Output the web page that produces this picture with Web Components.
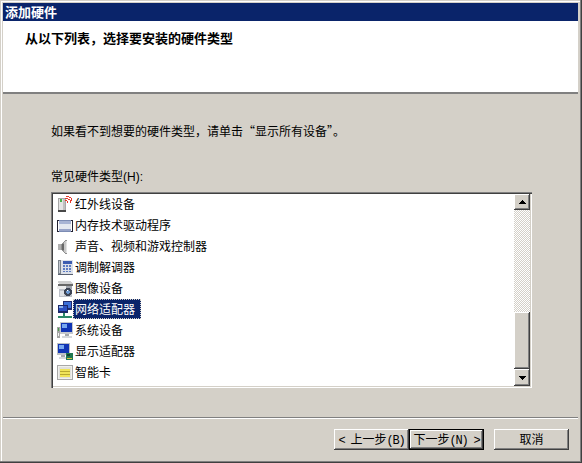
<!DOCTYPE html>
<html lang="zh-CN">
<head>
<meta charset="utf-8">
<title>添加硬件</title>
<style>
  html, body { margin: 0; padding: 0; background: #d4d0c8; }
  body { font: 12px/16px "Noto Sans CJK SC", sans-serif; color: #000; }
</style>
</head>
<body>

<wizard-window caption="添加硬件" heading="从以下列表，选择要安装的硬件类型">
  <wizard-text>如果看不到想要的硬件类型，请单击“显示所有设备”。</wizard-text>
  <hw-list label="常见硬件类型" access="(H):">
    <hw-item icon="infrared">红外线设备</hw-item>
    <hw-item icon="memory">内存技术驱动程序</hw-item>
    <hw-item icon="sound">声音、视频和游戏控制器</hw-item>
    <hw-item icon="modem">调制解调器</hw-item>
    <hw-item icon="imaging">图像设备</hw-item>
    <hw-item icon="network" selected>网络适配器</hw-item>
    <hw-item icon="system">系统设备</hw-item>
    <hw-item icon="display">显示适配器</hw-item>
    <hw-item icon="smartcard">智能卡</hw-item>
  </hw-list>
  <win-button slot="footer"><span>&lt; </span>上一步<span>(B)</span></win-button>
  <win-button slot="footer" default>下一步<span>(N) &gt;</span></win-button>
  <win-button slot="footer" class="cancel">取消</win-button>
</wizard-window>

<script>
(function () {
  'use strict';

  const BEVEL = 'inset -1px -1px 0 #404040, inset 1px 1px 0 #fff, inset -2px -2px 0 #808080';

  class WizardWindow extends HTMLElement {
    constructor() {
      super();
      this.attachShadow({ mode: 'open' });
    }

    connectedCallback() {
      const caption = this.getAttribute('caption') || '';
      const heading = this.getAttribute('heading') || '';

      this.shadowRoot.innerHTML = `
        <style>
          :host {
            display: flex;
            flex-direction: column;
            box-sizing: border-box;
            width: 582px;
            height: 463px;
            padding: 3px 4px 4px 3px;
            background: #d4d0c8;
            box-shadow: inset -1px -1px 0 #404040, inset -2px -2px 0 #808080,
                        inset 1px 1px 0 #d4d0c8, inset 2px 2px 0 #fff;
          }
          .title {
            height: 18px;
            line-height: 18px;
            padding-left: 2px;
            background: #0a246a;
            color: #fff;
            font-size: 13px;
            font-weight: 700;
          }
          .head {
            box-sizing: border-box;
            height: 73px;
            padding: 8px 0 0 22px;
            background: #fff;
            box-shadow: inset 0 -2px 0 #808080, inset 0 -1px 0 #fff;
            font-size: 13px;
            line-height: 17px;
            font-weight: 700;
          }
          .body {
            flex: 1;
            display: flex;
            flex-direction: column;
            min-height: 0;
            padding: 29px 0 0 48px;
            gap: 29px;
          }
          .foot {
            height: 42px;
            box-sizing: border-box;
            padding: 11px 9px 0 0;
            display: flex;
            justify-content: flex-end;
            align-items: flex-start;
            border-top: 1px solid #808080;
            box-shadow: inset 0 1px 0 #fff;
          }
          ::slotted(.cancel) { margin-left: 10px; }
        </style>
        <div class="title">${caption}</div>
        <div class="head">${heading}</div>
        <div class="body"><slot></slot></div>
        <div class="foot"><slot name="footer"></slot></div>
      `;
    }
  }

  class WizardText extends HTMLElement {
    constructor() {
      super();
      this.attachShadow({ mode: 'open' });
      this.shadowRoot.innerHTML = `
        <style>:host { display: block; height: 16px; line-height: 16px; color: #000; }</style>
        <slot></slot>
      `;
    }
  }

  class HwList extends HTMLElement {
    constructor() {
      super();
      this.attachShadow({ mode: 'open' });
    }

    connectedCallback() {
      const label = this.getAttribute('label') || '';
      const access = this.getAttribute('access') || '';

      this.shadowRoot.innerHTML = `
        <style>
          :host { display: block; }
          .label { height: 16px; line-height: 16px; margin-bottom: 8px; }
          .label span { font: 12px/16px "Liberation Sans", sans-serif; }
          .box {
            box-sizing: border-box;
            width: 481px;
            height: 196px;
            padding: 2px;
            display: flex;
            background: #fff;
            box-shadow: inset 1px 1px 0 #808080, inset 2px 2px 0 #404040,
                        inset -1px -1px 0 #fff, inset -2px -2px 0 #d4d0c8;
          }
          .rows { flex: 1; min-width: 0; overflow: hidden; }
        </style>
        <div class="label">${label}<span>${access}</span></div>
        <div class="box">
          <div class="rows"><slot></slot></div>
          <hw-scrollbar></hw-scrollbar>
        </div>
      `;
    }
  }

  class HwScrollbar extends HTMLElement {
    constructor() {
      super();
      this.attachShadow({ mode: 'open' });
      this.shadowRoot.innerHTML = `
        <style>
          :host { display: flex; flex-direction: column; width: 16px; height: 192px; flex: none; }
          .btn {
            height: 16px;
            flex: none;
            display: flex;
            align-items: center;
            justify-content: center;
            background: #d4d0c8;
            box-shadow: ${BEVEL};
          }
          .down { height: 17px; }
          .track {
            flex: 1;
            background: repeating-conic-gradient(#d4d0c8 0 25%, #fff 0 50%) 0 0 / 2px 2px;
          }
          .thumb { height: 57px; flex: none; background: #d4d0c8; box-shadow: ${BEVEL}; }
          svg { display: block; }
        </style>
        <div class="btn"><svg width="7" height="4" shape-rendering="crispEdges"><path d="M3 0h1v1h1v1h1v1h1v1H0V3h1V2h1V1h1z"/></svg></div>
        <div class="track"></div>
        <div class="thumb"></div>
        <div class="btn down"><svg width="7" height="4" shape-rendering="crispEdges"><path d="M0 0h7v1H6v1H5v1H4v1H3V3H2V2H1V1H0z"/></svg></div>
      `;
    }
  }

  class HwItem extends HTMLElement {
    constructor() {
      super();
      this.attachShadow({ mode: 'open' });
    }

    connectedCallback() {
      const icon = this.getAttribute('icon') || '';
      this.shadowRoot.innerHTML = `
        <style>
          :host {
            display: flex;
            align-items: center;
            height: 21px;
            padding-left: 4px;
          }
          .text {
            box-sizing: border-box;
            margin-bottom: 1px;
            padding: 0 6px 0 2px;
            height: 20px;
            line-height: 20px;
            white-space: nowrap;
          }
          :host([selected]) .text {
            padding: 0 5px 0 1px;
            line-height: 18px;
            background: #0a246a;
            color: #fff;
            border: 1px dotted #d4d0c8;
          }
        </style>
        <hw-icon name="${icon}"></hw-icon>
        <span class="text"><slot></slot></span>
      `;
    }
  }

  // 16x17 cells, drawn to follow the old Windows device icons
  const ICONS = {
    infrared: `
      <rect x="1" y="2" width="8" height="13" fill="#a8a8a8"/>
      <rect x="2" y="3" width="5" height="11" fill="#e4e4e4"/>
      <rect x="6" y="3" width="2" height="11" fill="#c0c0c0"/>
      <rect x="3" y="3" width="2" height="3" fill="#48b048"/>
      <rect x="1" y="14" width="8" height="2" fill="#484848"/>
      <path d="M8 4h2v1h1v2h-1V5H8zM8 2h3v1h2v1h1v3h-1V4h-2V3H8zM9 0h3v1h2v1h1v3h-1V2h-2V1H9z" fill="#e83828"/>`,
    memory: `
      <path d="M0 3h2v1H1v10h1v1H0zM14 3h2v12h-2v-1h1V4h-1z" fill="#202030"/>
      <rect x="2" y="3" width="12" height="12" fill="#7c8cb4"/>
      <rect x="2" y="4" width="12" height="3" fill="#a8b4d4"/>
      <rect x="2" y="7" width="12" height="5" fill="#e4e8f0"/>
      <rect x="2" y="12" width="12" height="2" fill="#98a4c8"/>`,
    sound: `
      <rect x="1" y="6" width="4" height="6" fill="#b0b0b0"/>
      <path d="M4 6h1V5h1V4h1V3h1V2h2v14H8v-1H7v-1H6v-1H5v-1H4z" fill="#909090"/>
      <path d="M7 4h1V3h2v12H8v-1H7z" fill="#c8c8c8"/>
      <rect x="5" y="6" width="2" height="6" fill="#686868"/>
      <rect x="9" y="3" width="1" height="12" fill="#e4e4e4"/>`,
    modem: `
      <rect x="3" y="1" width="13" height="14" fill="#dce0e8"/>
      <rect x="1" y="1" width="3" height="14" fill="#7c848c"/>
      <rect x="2" y="2" width="1" height="12" fill="#c4c8d0"/>
      <rect x="6" y="2" width="9" height="3" fill="#3c5cb0"/>
      <path d="M6 6h2v2H6zM9 6h2v2H9zM12 6h2v2h-2zM6 9h2v2H6zM9 9h2v2H9zM12 9h2v2h-2zM6 12h2v1H6zM9 12h2v1H9zM12 12h2v1h-2z" fill="#5c7cc4"/>
      <rect x="1" y="15" width="15" height="1" fill="#586070"/>`,
    imaging: `
      <path d="M1 1h13l2 3H2z" fill="#d0d0d0"/>
      <rect x="1" y="4" width="15" height="2" fill="#686868"/>
      <rect x="0" y="6" width="9" height="3" fill="#ececec"/>
      <rect x="2" y="9" width="13" height="8" fill="#bcc0c8"/>
      <rect x="9" y="6" width="6" height="3" fill="#a0a4ac"/>
      <rect x="3" y="11" width="4" height="5" fill="#dcdfe4"/>
      <path d="M9 8h4v1h1v1h1v4h-1v1h-1v1H9v-1H8v-1H7v-4h1V9h1z" fill="#3c4454"/>
      <path d="M10 10h2v1h1v2h-1v1h-2v-1H9v-2h1z" fill="#6c98d0"/>
      <rect x="10" y="10" width="1" height="1" fill="#fff"/>`,
    network: `
      <rect x="6" y="0" width="9" height="9" fill="#202c70"/>
      <rect x="7" y="1" width="7" height="6" fill="#3c70d8"/>
      <rect x="1" y="4" width="10" height="8" fill="#1c2868"/>
      <rect x="2" y="5" width="8" height="5" fill="#2c50c0"/>
      <rect x="2" y="5" width="4" height="2" fill="#88b0ec"/>
      <rect x="6" y="12" width="2" height="3" fill="#2c8868"/>
      <rect x="1" y="15" width="14" height="2" fill="#2c8868"/>`,
    system: `
      <rect x="0" y="5" width="3" height="11" fill="#a4a4a4"/>
      <rect x="1" y="6" width="1" height="3" fill="#48a048"/>
      <rect x="1" y="11" width="1" height="3" fill="#f4f4f4"/>
      <rect x="3" y="0" width="13" height="12" fill="#c4c8cc"/>
      <rect x="4" y="1" width="11" height="9" fill="#1034b4"/>
      <rect x="5" y="2" width="5" height="4" fill="#78a8f0"/>
      <rect x="8" y="12" width="4" height="2" fill="#a4a8ac"/>
      <rect x="5" y="14" width="10" height="2" fill="#d4d8dc"/>`,
    display: `
      <rect x="0" y="0" width="13" height="12" fill="#bcc0c4"/>
      <rect x="1" y="1" width="11" height="9" fill="#1034b4"/>
      <rect x="2" y="2" width="5" height="4" fill="#78a8f0"/>
      <rect x="4" y="12" width="4" height="2" fill="#a4a8ac"/>
      <rect x="2" y="14" width="7" height="2" fill="#d4d8dc"/>
      <rect x="9" y="10" width="7" height="7" fill="#207850"/>
      <rect x="10" y="11" width="3" height="2" fill="#104030"/>
      <rect x="10" y="15" width="5" height="1" fill="#d8c040"/>`,
    smartcard: `
      <rect x="0" y="1" width="16" height="15" fill="#a8a8a8"/>
      <rect x="1" y="2" width="14" height="13" fill="#f0f0ec"/>
      <rect x="2" y="3" width="12" height="11" fill="#e0e0dc"/>
      <rect x="3" y="5" width="10" height="8" fill="#f0e458"/>
      <path d="M3 7h10v1H3zM3 10h10v1H3z" fill="#b8a830"/>`
  };

  class HwIcon extends HTMLElement {
    constructor() {
      super();
      this.attachShadow({ mode: 'open' });
    }

    connectedCallback() {
      const name = this.getAttribute('name');
      this.shadowRoot.innerHTML = `
        <style>
          :host { display: block; width: 16px; height: 17px; flex: none; }
          svg { display: block; overflow: visible; }
        </style>
        <svg width="16" height="17" viewBox="0 0 16 17" shape-rendering="crispEdges">${ICONS[name] || ''}</svg>
      `;
    }
  }

  class WinButton extends HTMLElement {
    constructor() {
      super();
      this.attachShadow({ mode: 'open' });
      this.shadowRoot.innerHTML = `
        <style>
          :host {
            display: block;
            box-sizing: border-box;
            width: 75px;
            height: 21px;
            line-height: 20px;
            text-align: center;
            background: #d4d0c8;
            box-shadow: ${BEVEL};
          }
          :host([default]) {
            box-shadow: inset 0 0 0 1px #000, inset -2px -2px 0 #404040,
                        inset 2px 2px 0 #fff, inset -3px -3px 0 #808080;
          }
          slot { white-space: pre; }
          ::slotted(span) { font: 12px/16px "Liberation Mono", monospace; letter-spacing: -1.2px; }
        </style>
        <slot></slot>
      `;
    }
  }

  customElements.define('wizard-window', WizardWindow);
  customElements.define('wizard-text', WizardText);
  customElements.define('hw-list', HwList);
  customElements.define('hw-scrollbar', HwScrollbar);
  customElements.define('hw-item', HwItem);
  customElements.define('hw-icon', HwIcon);
  customElements.define('win-button', WinButton);
})();
</script>
</body>
</html>
